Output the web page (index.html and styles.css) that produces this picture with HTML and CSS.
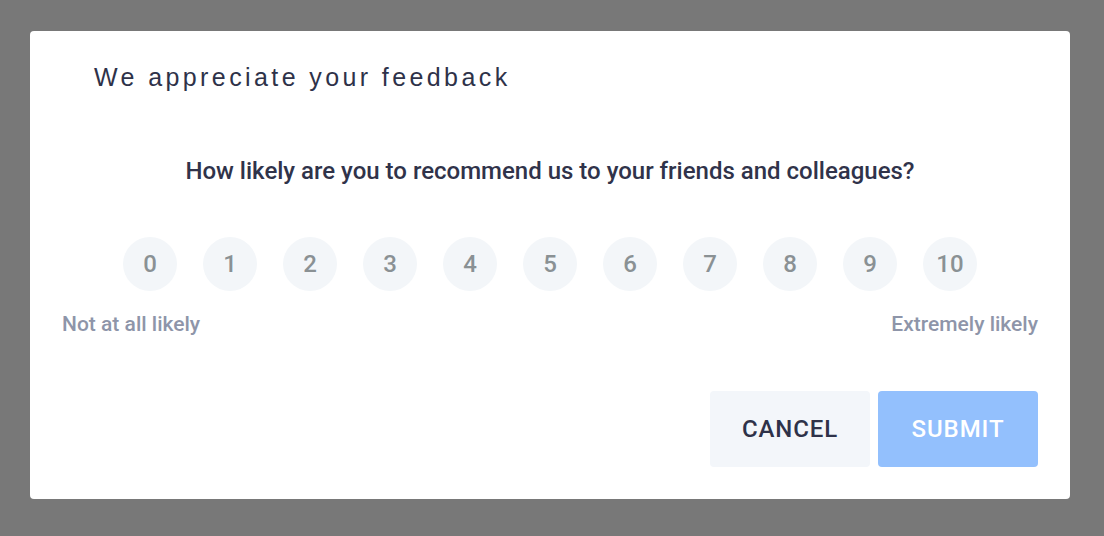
FILE: index.html
```html
<!DOCTYPE html>
<html>
<head>
<meta charset="utf-8">
<link rel="stylesheet" href="styles.css">
</head>
<body>
<div class="overlay">
  <div class="modal">
    <h1 class="title">We appreciate your feedback</h1>
    <p class="question">How likely are you to recommend us to your friends and colleagues?</p>
    <div class="scale">
      <span class="num">0</span><span class="num">1</span><span class="num">2</span><span class="num">3</span><span class="num">4</span><span class="num">5</span><span class="num">6</span><span class="num">7</span><span class="num">8</span><span class="num">9</span><span class="num">10</span>
    </div>
    <div class="labels">
      <span>Not at all likely</span>
      <span>Extremely likely</span>
    </div>
    <div class="actions">
      <button class="btn cancel">CANCEL</button>
      <button class="btn submit">SUBMIT</button>
    </div>
  </div>
</div>
</body>
</html>
```
FILE: styles.css
```css
html, body {
  margin: 0;
  padding: 0;
  height: 100%;
}
body {
  background: #787878;
  font-family: Roboto, "Liberation Sans", sans-serif;
}
.overlay {
  padding: 31px 34px 0 30px;
}
.modal {
  background: #fff;
  border-radius: 4px;
  height: 468px;
  box-sizing: border-box;
  padding: 0 32px 32px;
  display: flex;
  flex-direction: column;
}
.title {
  margin: 0;
  padding: 29px 0 0 32px;
  font-family: "Liberation Sans", Arial, sans-serif;
  font-weight: 400;
  font-size: 25px;
  line-height: 34px;
  letter-spacing: 3.4px;
  color: #2e3249;
}
.question {
  margin: 63px 0 0;
  text-align: center;
  font-size: 24px;
  font-weight: 500;
  line-height: 28px;
  color: #30334a;
}
.scale {
  display: flex;
  justify-content: center;
  gap: 26px;
  margin-top: 52px;
}
.num {
  width: 54px;
  height: 54px;
  border-radius: 50%;
  background: #f3f6f9;
  display: flex;
  align-items: center;
  justify-content: center;
  font-size: 24px;
  font-weight: 500;
  color: #8a9194;
}
.labels {
  display: flex;
  justify-content: space-between;
  margin-top: 20px;
  font-size: 21px;
  font-weight: 500;
  line-height: 26px;
  color: #8e95a9;
}
.actions {
  margin-top: auto;
  display: flex;
  justify-content: flex-end;
  gap: 8px;
}
.btn {
  width: 160px;
  height: 76px;
  border: none;
  border-radius: 4px;
  font-family: Roboto, "Liberation Sans", sans-serif;
  font-size: 24px;
  font-weight: 500;
  letter-spacing: 0.9px;
  cursor: pointer;
}
.cancel {
  background: #f3f6fa;
  color: #2e3249;
}
.submit {
  background: #93c0fd;
  color: #fff;
}
```
